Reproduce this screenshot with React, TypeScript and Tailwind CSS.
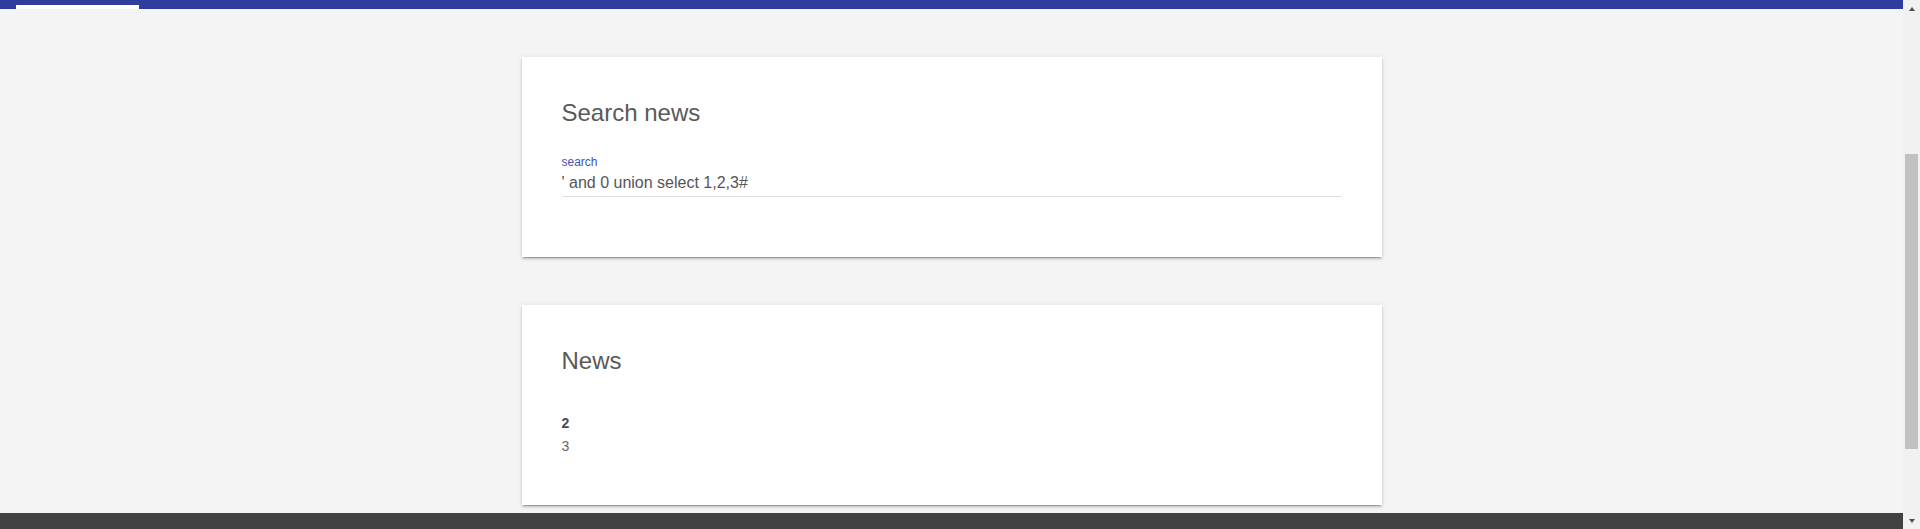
import React from "react";

const font = { fontFamily: '"Liberation Sans", Arial, sans-serif' };

function Card({ children }: { children: React.ReactNode }) {
  return (
    <div className="w-[860px] h-[200px] bg-white px-[40px] pt-[40px] shadow-[0_2px_2px_0_rgba(0,0,0,0.14),0_3px_1px_-2px_rgba(0,0,0,0.2),0_1px_5px_0_rgba(0,0,0,0.12)]">
      {children}
    </div>
  );
}

export default function App() {
  return (
    <div className="flex w-[1920px] h-[529px] overflow-hidden bg-[#f4f4f4]" style={font}>
      <div className="flex flex-1 flex-col">
        <div className="h-[9px] bg-[#2f3d9e] flex shrink-0">
          <div className="ml-[16px] mt-[5px] w-[123px] h-[4px] bg-white" />
        </div>
        <div className="flex flex-1 flex-col items-center pt-[48px] gap-[48px]">
          <Card>
            <h2 className="text-[24px] leading-[32px] text-[#595959] font-normal">Search news</h2>
            <div className="mt-[25px]">
              <div className="text-[12px] leading-[16px] text-[#3f51b5]">search</div>
              <div className="text-[16px] leading-[24px] text-[#555555] pt-[1px] pb-[1px] border-b border-[#e0e0e0]">
                ' and 0 union select 1,2,3#
              </div>
            </div>
          </Card>
          <Card>
            <h2 className="text-[24px] leading-[32px] text-[#595959] font-normal">News</h2>
            <div className="mt-[35px] text-[14px] leading-[22.5px]">
              <div className="font-bold text-[#4a4a4a]">2</div>
              <div className="text-[#666666]">3</div>
            </div>
          </Card>
        </div>
        <div className="h-[16px] bg-[#424242] shrink-0" />
      </div>
      <div className="w-[17px] bg-[#f1f1f1] flex flex-col items-center shrink-0">
        <div className="h-[17px] flex items-center justify-center">
          <div className="w-0 h-0 border-l-[3.5px] border-r-[3.5px] border-b-[4px] border-l-transparent border-r-transparent border-b-[#505050]" />
        </div>
        <div className="flex-1 w-full pt-[137px] pb-[63px] px-[2px]">
          <div className="w-[13px] h-[295px] bg-[#c1c1c1]" />
        </div>
        <div className="h-[17px] flex items-center justify-center">
          <div className="w-0 h-0 border-l-[3.5px] border-r-[3.5px] border-t-[4px] border-l-transparent border-r-transparent border-t-[#505050]" />
        </div>
      </div>
    </div>
  );
}
